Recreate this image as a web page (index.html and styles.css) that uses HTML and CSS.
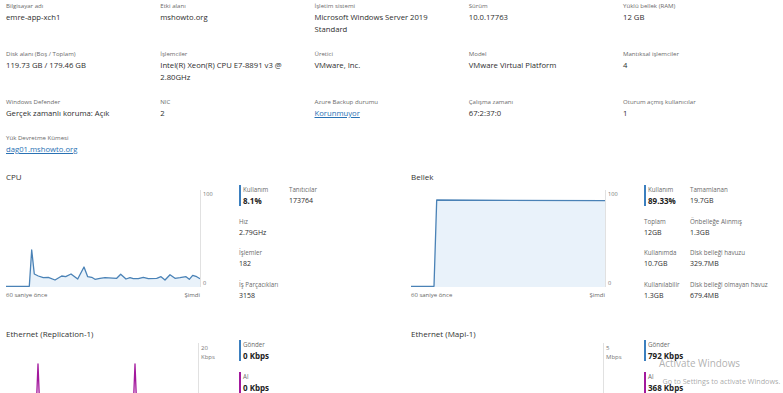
FILE: index.html
```html
<!DOCTYPE html>
<html lang="tr">
<head>
<meta charset="utf-8">
<title>Genel Bakış</title>
<link rel="stylesheet" href="styles.css">
</head>
<body>
<div class="page">
  <section class="props">
    <div class="prop"><div class="lbl">Bilgisayar adı</div><div class="val">emre-app-xch1</div></div>
    <div class="prop"><div class="lbl">Etki alanı</div><div class="val">mshowto.org</div></div>
    <div class="prop"><div class="lbl">İşletim sistemi</div><div class="val">Microsoft Windows Server 2019 Standard</div></div>
    <div class="prop"><div class="lbl">Sürüm</div><div class="val">10.0.17763</div></div>
    <div class="prop"><div class="lbl">Yüklü bellek (RAM)</div><div class="val">12 GB</div></div>

    <div class="prop"><div class="lbl">Disk alanı (Boş / Toplam)</div><div class="val">119.73 GB / 179.46 GB</div></div>
    <div class="prop"><div class="lbl">İşlemciler</div><div class="val">Intel(R) Xeon(R) CPU E7-8891 v3 @ 2.80GHz</div></div>
    <div class="prop"><div class="lbl">Üretici</div><div class="val">VMware, Inc.</div></div>
    <div class="prop"><div class="lbl">Model</div><div class="val">VMware Virtual Platform</div></div>
    <div class="prop"><div class="lbl">Mantıksal işlemciler</div><div class="val">4</div></div>

    <div class="prop"><div class="lbl">Windows Defender</div><div class="val">Gerçek zamanlı koruma: Açık</div></div>
    <div class="prop"><div class="lbl">NIC</div><div class="val">2</div></div>
    <div class="prop"><div class="lbl">Azure Backup durumu</div><div class="val"><a class="link" href="#">Korunmuyor</a></div></div>
    <div class="prop"><div class="lbl">Çalışma zamanı</div><div class="val">67:2:37:0</div></div>
    <div class="prop"><div class="lbl">Oturum açmış kullanıcılar</div><div class="val">1</div></div>

    <div class="prop"><div class="lbl">Yük Devretme Kümesi</div><div class="val"><a class="link" href="#">dag01.mshowto.org</a></div></div>
  </section>

  <section class="perf">
    <!-- CPU -->
    <div class="panel">
      <h2 class="panel-title">CPU</h2>
      <div class="panel-body">
        <div class="chart">
          <div class="plot-row">
            <svg class="plot" viewBox="0 0 194 97" preserveAspectRatio="none">
              <path class="area-cpu" d="M0,96.5 L23.3,96 L25.7,60 L28.3,84 L32.3,86 L37.3,87.7 L42.3,87.3 L49,90 L55.7,86 L59.7,86.7 L65,84 L71.7,89 L78,77 L81.7,86.7 L85.7,87.3 L89,89.3 L94,88.3 L99,87.7 L110.7,88.3 L114.7,84.3 L120,89 L124,87.7 L127.3,88.7 L132.3,88.7 L137.3,87.3 L142.3,88.7 L150.7,88.3 L155,86.7 L159,90 L164,84.7 L169,88.3 L174,87.7 L180,86.7 L183.3,89.3 L186.7,85.3 L190.7,86.7 L194,88.7 L194,97 L0,97 Z"/>
              <polyline class="line-cpu" points="0,96.3 23.3,96.3 25.7,60 28.3,84 32.3,86 37.3,87.7 42.3,87.3 49,90 55.7,86 59.7,86.7 65,84 71.7,89 78,77 81.7,86.7 85.7,87.3 89,89.3 94,88.3 99,87.7 110.7,88.3 114.7,84.3 120,89 124,87.7 127.3,88.7 132.3,88.7 137.3,87.3 142.3,88.7 150.7,88.3 155,86.7 159,90 164,84.7 169,88.3 174,87.7 180,86.7 183.3,89.3 186.7,85.3 190.7,86.7 194,88.7"/>
            </svg>
            <div class="axis"><span>100</span><span>0</span></div>
          </div>
          <div class="xlabels"><span>60 saniye önce</span><span>Şimdi</span></div>
        </div>
        <div class="stats stats--cpu">
          <div class="stat stat--bar"><div class="stat-lbl">Kullanım</div><div class="stat-val stat-val--strong">8.1%</div></div>
          <div class="stat"><div class="stat-lbl">Tanıtıcılar</div><div class="stat-val">173764</div></div>
          <div class="stat stat--wide"><div class="stat-lbl">Hız</div><div class="stat-val">2.79GHz</div></div>
          <div class="stat stat--wide"><div class="stat-lbl">İşlemler</div><div class="stat-val">182</div></div>
          <div class="stat stat--wide"><div class="stat-lbl">İş Parçacıkları</div><div class="stat-val">3158</div></div>
        </div>
      </div>
    </div>

    <!-- Bellek -->
    <div class="panel">
      <h2 class="panel-title">Bellek</h2>
      <div class="panel-body">
        <div class="chart">
          <div class="plot-row">
            <svg class="plot" viewBox="0 0 194 97" preserveAspectRatio="none">
              <path class="area-cpu" d="M0,96.5 L23,96.5 L25.7,10 L194,10.7 L194,97 L0,97 Z"/>
              <polyline class="line-cpu" points="0,96.3 23,96.3 25.7,10 194,10.7"/>
            </svg>
            <div class="axis"><span>100</span><span>0</span></div>
          </div>
          <div class="xlabels"><span>60 saniye önce</span><span>Şimdi</span></div>
        </div>
        <div class="stats stats--mem">
          <div class="stat stat--bar"><div class="stat-lbl">Kullanım</div><div class="stat-val stat-val--strong">89.33%</div></div>
          <div class="stat"><div class="stat-lbl">Tamamlanan</div><div class="stat-val">19.7GB</div></div>
          <div class="stat"><div class="stat-lbl">Toplam</div><div class="stat-val">12GB</div></div>
          <div class="stat"><div class="stat-lbl">Önbelleğe Alınmış</div><div class="stat-val">1.3GB</div></div>
          <div class="stat"><div class="stat-lbl">Kullanımda</div><div class="stat-val">10.7GB</div></div>
          <div class="stat"><div class="stat-lbl">Disk belleği havuzu</div><div class="stat-val">329.7MB</div></div>
          <div class="stat"><div class="stat-lbl">Kullanılabilir</div><div class="stat-val">1.3GB</div></div>
          <div class="stat"><div class="stat-lbl">Disk belleği olmayan havuz</div><div class="stat-val">679.4MB</div></div>
        </div>
      </div>
    </div>

    <!-- Ethernet (Replication-1) -->
    <div class="panel panel--net">
      <h2 class="panel-title">Ethernet (Replication-1)</h2>
      <div class="panel-body">
        <div class="chart">
          <div class="plot-row">
            <svg class="plot" viewBox="0 0 192 97" preserveAspectRatio="none">
              <path class="area-net" d="M0,96 L29,96 L32,21 L35,96 L126,96 L129,21 L132,96 L192,96 L192,97 L0,97 Z"/>
              <polyline class="line-net" points="0,96 29,96 32,21 35,96 126,96 129,21 132,96 192,96"/>
            </svg>
            <div class="axis"><span>20</span><span>Kbps</span></div>
          </div>
        </div>
        <div class="stats stats--net">
          <div class="stat stat--bar"><div class="stat-lbl">Gönder</div><div class="stat-val stat-val--strong">0 Kbps</div></div>
          <div class="stat stat--bar stat--recv"><div class="stat-lbl">Al</div><div class="stat-val stat-val--strong">0 Kbps</div></div>
        </div>
      </div>
    </div>

    <!-- Ethernet (Mapi-1) -->
    <div class="panel panel--net">
      <h2 class="panel-title">Ethernet (Mapi-1)</h2>
      <div class="panel-body">
        <div class="chart">
          <div class="plot-row">
            <svg class="plot" viewBox="0 0 192 97" preserveAspectRatio="none"></svg>
            <div class="axis"><span>5</span><span>Mbps</span></div>
          </div>
        </div>
        <div class="stats stats--net">
          <div class="stat stat--bar"><div class="stat-lbl">Gönder</div><div class="stat-val stat-val--strong">792 Kbps</div></div>
          <div class="stat stat--bar stat--recv"><div class="stat-lbl">Al</div><div class="stat-val stat-val--strong">368 Kbps</div></div>
        </div>
      </div>
    </div>
  </section>
</div>

<div class="activate">
  <div class="activate-title">Activate Windows</div>
  <div class="activate-sub">Go to Settings to activate Windows.</div>
</div>
</body>
</html>
```

FILE: styles.css
```css
* {
  box-sizing: border-box;
  margin: 0;
  padding: 0;
}

html,
body {
  overflow: hidden;
  background: #ffffff;
}

body {
  width: 783px;
  height: 393px;
  font-family: "Open Sans", "Noto Sans", sans-serif;
  color: #333333;
}

.page {
  padding-left: 6px;
}

/* ---------- properties grid ---------- */
.props {
  display: grid;
  grid-template-columns: repeat(5, 154.25px);
  row-gap: 14px;
  padding-top: 1px;
}

.prop {
  padding-right: 20px;
}

.lbl {
  font-size: 6.1px;
  line-height: 10px;
  color: #6a6a6a;
}

.val {
  font-size: 7.7px;
  line-height: 12px;
  color: #2e2e2e;
}

.link {
  color: #2a72b4;
  text-decoration: underline;
}

/* ---------- performance panels ---------- */
.perf {
  display: grid;
  grid-template-columns: 405px 1fr;
  row-gap: 26px;
  margin-top: 15px;
}

.panel-title {
  font-size: 8px;
  line-height: 13px;
  font-weight: 400;
  color: #333333;
}

.panel-body {
  display: flex;
}

.chart {
  flex: none;
  width: 233px;
  padding-top: 7px;
}

.panel--net .chart {
  padding-top: 3.5px;
}

.plot-row {
  display: flex;
}

.plot {
  display: block;
  width: 194px;
  height: 97px;
  flex: none;
}

.panel--net .plot {
  width: 192px;
}

.area-cpu {
  fill: #e9f2fa;
}

.line-cpu {
  fill: none;
  stroke: #4a82b6;
  stroke-width: 1.3;
  stroke-linejoin: round;
}

.area-net {
  fill: #f5e6f4;
}

.line-net {
  fill: none;
  stroke: #a3199d;
  stroke-width: 1.3;
  stroke-linejoin: round;
}

.axis {
  height: 97px;
  border-left: 1px solid #e1e1e1;
  padding-left: 2px;
  display: flex;
  flex-direction: column;
  justify-content: space-between;
  font-size: 5.6px;
  line-height: 8px;
  color: #777777;
}

.panel--net .axis {
  justify-content: flex-start;
  padding-top: 1px;
  font-size: 6px;
  line-height: 8.5px;
}

.xlabels {
  width: 194px;
  display: flex;
  justify-content: space-between;
  margin-top: 3px;
  font-size: 6px;
  line-height: 10px;
  color: #666666;
}

/* ---------- stats ---------- */
.stats {
  display: grid;
  grid-template-columns: 50px auto;
  row-gap: 10.5px;
  align-content: start;
  margin-top: 2px;
}

.stats--mem {
  grid-template-columns: 46px auto;
}

.stats--net {
  grid-template-columns: auto;
  margin-top: 0.5px;
}

.stat--wide {
  grid-column: 1 / -1;
}

.stat-lbl {
  font-size: 6.2px;
  line-height: 10px;
  color: #6a6a6a;
  white-space: nowrap;
}

.stat-val {
  font-size: 7px;
  line-height: 11px;
  color: #2e2e2e;
  white-space: nowrap;
}

.stat-val--strong {
  font-size: 8px;
  font-weight: 700;
  color: #222222;
}

.stat--bar {
  border-left: 2px solid #3b7fbf;
  padding-left: 2px;
}

.stat--recv {
  border-left-color: #a3199d;
}

/* ---------- watermark overlay ---------- */
.activate {
  position: absolute;
  left: 659px;
  top: 356px;
  white-space: nowrap;
  pointer-events: none;
}

.activate-title {
  font-size: 9.9px;
  line-height: 14px;
  color: rgba(150, 150, 150, 0.75);
}

.activate-sub {
  margin-top: 5.7px;
  margin-left: 3.5px;
  font-size: 7.2px;
  line-height: 10px;
  color: rgba(140, 140, 140, 0.75);
}
```
